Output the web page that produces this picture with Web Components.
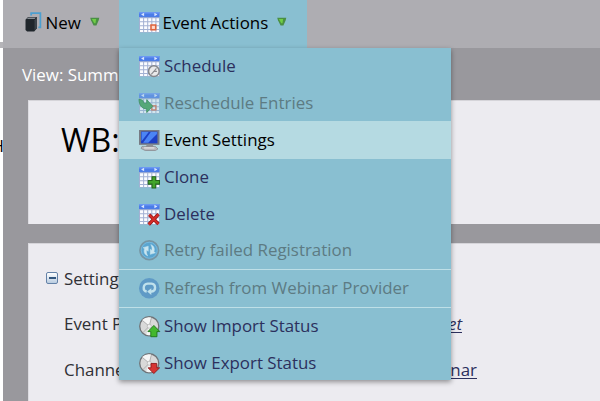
<!DOCTYPE html>
<html lang="en">
<head>
<meta charset="utf-8">
<title>Event Actions</title>
<style>
    html, body {
        margin: 0;
        height: 100%;
        overflow: hidden;
    }
    body {
        font-family: 'Open Sans', 'Noto Sans', sans-serif;
        font-size: 16.9px;
        color: #000;
    }
</style>
</head>
<body>
<event-page></event-page>

<script>
const grid = `
    <rect x="0" y="1" width="20" height="19" fill="#a3b1d3"/>
    <path d="M1 6h3v3H1zM5 6h3v3H5zM9 6h3v3H9zM13 6h3v3h-3zM17 6h2.500v3H17zM1 10h3v3H1zM5 10h3v3H5zM9 10h3v3H9zM13 10h3v3h-3zM17 10h2.500v3H17zM1 14h3v2.500H1zM5 14h3v2.500H5zM9 14h3v2.500H9zM13 14h3v2.500h-3zM17 14h2.500v2.500H17zM1 17.500h3v2H1zM5 17.500h3v2H5zM9 17.500h3v2H9zM13 17.500h3v2h-3zM17 17.500h2.500v2H17z" fill="#fbfcff"/>
    <rect width="20" height="5" fill="#4b7ce8"/>
    <path d="M0 0h20v1.500H0z" fill="#6b98f2"/>
    <path d="M2 2.500l3-1.700v3.400zM18 2.500l-3-1.700v3.400z" fill="#d9e6ff"/>`;

const disc = `
    <circle cx="10" cy="10" r="9.300" fill="#d9d9d9" stroke="#6f7377" stroke-width="1.300"/>
    <path d="M10 10L3 4A9 9 0 0 1 12 1.500zM10 10l7 6a9 9 0 0 1-10 2z" fill="#f6f6f6"/>
    <path d="M10 10L3.500 4.500M10 10l2-8M10 10l-6 6" stroke="#a4a4a4" stroke-width=".8"/>
    <circle cx="10" cy="10" r="2" fill="#eee" stroke="#aaa" stroke-width=".6"/>`;

const icons = {
    new: `
        <path d="M6 3.500V1h9v14h-2" fill="none" stroke="#4c9fd0" stroke-width="1.700"/>
        <path d="M.5 7.500L3 4.800h8.500V16L9 19H2L.5 17.500z" fill="#20262c"/>
        <path d="M1.800 6.800L3.200 5.300h7.500L9.400 6.900z" fill="#868d93"/>
        <path d="M9.300 8l2-2.500v10l-2 2.500z" fill="#3c444c"/>`,
    calendar: grid + `<rect x="11.700" y="12.700" width="4.600" height="4.600" fill="#ffd9cc" stroke="#e0633c" stroke-width="1.500"/>`,
    schedule: grid + `
        <circle cx="14.500" cy="14.800" r="5.200" fill="#e9e9ea" stroke="#85878c" stroke-width="1.500"/>
        <path d="M17 12l-2.500 3h3M14.500 15L12 18" fill="none" stroke="#8b8c90" stroke-width="1.100"/>`,
    reschedule: `<g opacity=".65">${grid}<rect x="12.500" y="12.500" width="4" height="4" fill="none" stroke="#e0633c" stroke-width="1.300"/></g>
        <path d="M0 6l3.500 1 1.500 3h2.500V6.500l6 6.500-6 6v-3.500C3 15.500 0 12 0 6z" fill="#55a878" stroke="#3f8f64" stroke-width=".8"/>`,
    settings: `
        <path d="M0 0h20v14.500H0z" fill="#777b84"/>
        <path d="M2 1.500h16v11.500H2z" fill="#1d3fc4"/>
        <path d="M2.500 2h7L2.500 11zM11.500 2h6v2L9 12.500H4z" fill="#4b84f5"/>
        <path d="M7.500 14.500h6l1 2H6.500z" fill="#8f9095"/>
        <path d="M3 16h13l2.500 2.500L16 20H6l-4-2z" fill="#b8b6ba" stroke="#85848a" stroke-width=".7"/>
        <path d="M5 17.500h10" stroke="#eee"/>`,
    clone: grid + `<path d="M12.700 9.500h3.600v3.700H20v3.500h-3.700v3.700h-3.600v-3.700H9v-3.500h3.700z" fill="#43a52c" stroke="#24641a"/>`,
    delete: grid + `<path d="M10 10.500l9 9M19 10l-9.500 10" stroke="#8c1414" stroke-width="3.200"/><path d="M10 10.500l9 9M19 10l-9.500 10" stroke="#d42c28" stroke-width="2.100"/>`,
    retry: `
        <circle cx="10" cy="10" r="9.100" fill="#5aa5d0" stroke="#7795a3" stroke-width="1.600"/>
        <circle cx="10" cy="10" r="7.800" fill="none" stroke="#7fbbdc" stroke-width=".8"/>
        <path d="M8.500 15.500C5 14 4.500 11 5.500 8.500L4 7.500l5-1.500v5L7.500 9.800c-.6 2 0 4 1 5.700zM11.500 4.500c3.500 1.500 4 4.500 3 7l1.500 1-5 1.500V9l1.500 1.200c.6-2 0-4-1-5.700z" fill="#c9e5f0" stroke="#c9e5f0" stroke-width=".5"/>`,
    refresh: `
        <circle cx="10" cy="10" r="10" fill="#5f9ac6"/>
        <path d="M7.500 13.200C3.500 12.700 3.400 6 8.500 5.500h3.700c4.600.5 4.600 7.200.3 7.700h-1" fill="none" stroke="#c0e1ec" stroke-width="2.300"/>
        <path d="M12 10v6.500l-4-3.300z" fill="#c0e1ec"/>`,
    import: disc + `<path d="M14.500 9.200l5.800 6h-2.800v5h-6v-5H8.700z" fill="#43b82e" stroke="#1f761b" stroke-width=".9"/>`,
    export: disc + `<path d="M14.500 20l5.600-5.500h-2.800v-4.300h-5.600v4.300H8.900z" fill="#d73432" stroke="#8f1c1c" stroke-width=".9"/>`,
    arrow: `
        <path d="M.5 1.500h19l-1 5-5 11.500h-6L2 7z" fill="#4a8f44"/>
        <path d="M4 4h9l-1.500 9H9z" fill="#6fce45"/>`
};

class UiIcon extends HTMLElement {
    connectedCallback() {
        this.attachShadow({ mode: 'open' }).innerHTML = `
            <style>
                :host { display: block; flex: none; width: 20.500px; height: 20.500px; }
                svg { display: block; width: 100%; height: 100%; overflow: visible; }
            </style>
            <svg viewBox="0 0 20 20">${icons[this.getAttribute('name')]}</svg>
        `;
    }
}

class ToolbarButton extends HTMLElement {
    constructor() {
        super();
        this.attachShadow({ mode: 'open' }).innerHTML = `
            <style>
                :host {
                    display: flex;
                    align-items: center;
                    box-sizing: border-box;
                    height: 48px;
                    padding-bottom: 4px;
                    white-space: nowrap;
                }
                :host([active]) { background: #89bfd1; }
                .label { margin: 0 9px 0 3.500px; }
                .arrow { width: 9.500px; height: 9.500px; }
            </style>
            <slot name="icon"></slot>
            <span class="label"><slot></slot></span>
            <ui-icon class="arrow" name="arrow"></ui-icon>
        `;
    }
}

class MenuItem extends HTMLElement {
    constructor() {
        super();
        this.attachShadow({ mode: 'open' }).innerHTML = `
            <style>
                :host {
                    display: flex;
                    align-items: center;
                    gap: 5px;
                    box-sizing: border-box;
                    height: 36.500px;
                    padding-left: 19.500px;
                    color: #2c305d;
                    white-space: nowrap;
                }
                :host([disabled]) { color: #5d7b83; }
                :host([selected]) { height: 38px; background: #b5dae2; color: #000; }
                :host([divided]) { height: 38px; border-top: 1.500px solid #bedfe7; }
                :host([selected]) span,
                :host([selected]) ~ span { margin-top: -2px; }
                span { margin-top: -1px; }
            </style>
            <slot name="icon"></slot>
            <span><slot></slot></span>
        `;
    }
}

class ActionMenu extends HTMLElement {
    constructor() {
        super();
        const items = [
            ['schedule', 'Schedule', ''],
            ['reschedule', 'Reschedule Entries', 'disabled'],
            ['settings', 'Event Settings', 'selected'],
            ['clone', 'Clone', ''],
            ['delete', 'Delete', ''],
            ['retry', 'Retry failed Registration', 'disabled'],
            ['refresh', 'Refresh from Webinar Provider', 'disabled divided'],
            ['import', 'Show Import Status', 'divided'],
            ['export', 'Show Export Status', '']
        ];
        this.attachShadow({ mode: 'open' }).innerHTML = `
            <style>
                :host {
                    display: block;
                    box-sizing: border-box;
                    width: 332px;
                    height: 332px;
                    background: #89bfd1;
                    box-shadow: 0 2px 5px rgba(0, 0, 0, .4);
                }
            </style>
            ${items.map(([icon, text, state]) => `<menu-item ${state}><ui-icon slot="icon" name="${icon}"></ui-icon>${text}</menu-item>`).join('')}
        `;
    }
}

class ContentPanel extends HTMLElement {
    constructor() {
        super();
        this.attachShadow({ mode: 'open' }).innerHTML = `
            <style>
                :host {
                    display: block;
                    box-sizing: border-box;
                    background: #ecebf0;
                    border-top: 1px solid #d5d4d9;
                    border-left: 1px solid #dddce1;
                }
            </style>
            <slot></slot>
        `;
    }
}

class SettingRow extends HTMLElement {
    constructor() {
        super();
        this.attachShadow({ mode: 'open' }).innerHTML = `
            <style>
                :host {
                    display: flex;
                    justify-content: space-between;
                    align-items: center;
                    box-sizing: border-box;
                    height: 46px;
                    padding-left: 35px;
                    color: #303035;
                    white-space: nowrap;
                }
                ::slotted(a) {
                    color: #2c305d;
                    text-decoration: underline;
                    text-underline-offset: 2px;
                }
            </style>
            <slot name="label"></slot>
            <slot></slot>
        `;
    }
}

class EventPage extends HTMLElement {
    constructor() {
        super();
        this.attachShadow({ mode: 'open' }).innerHTML = `
            <style>
                :host {
                    display: flex;
                    position: relative;
                    width: 600px;
                    height: 401px;
                    overflow: hidden;
                    background: #fff;
                }
                .edge {
                    flex: none;
                    width: 3px;
                    overflow: hidden;
                }
                .edge .line {
                    height: 6px;
                    margin-top: 42px;
                    background: #b5b4b8;
                }
                .edge .text {
                    display: flex;
                    justify-content: flex-end;
                    margin-top: 86px;
                    line-height: 23px;
                    margin-right: -1px;
                }
                main {
                    flex: 1;
                    display: flex;
                    flex-direction: column;
                    min-width: 0;
                    background: #99989d;
                }
                .toolbar {
                    display: flex;
                    height: 48px;
                    flex: none;
                    background: #aeadb2;
                }
                .new { width: 116px; padding-left: 22px; }
                .new ui-icon { margin-right: -3.500px; }
                .actions { width: 188px; padding-left: 19.500px; }
                .view {
                    flex: none;
                    height: 52px;
                    line-height: 53px;
                    padding-left: 19px;
                    color: #fff;
                }
                content-panel { margin-left: 25px; flex: none; }
                .title { height: 124px; padding: 15px 0 0 32px; }
                h1 { margin: 0; font-weight: 400; font-size: 32px; line-height: 48px; }
                .settings { height: 158px; margin-top: 19px; padding-top: 12px; }
                .heading {
                    display: flex;
                    align-items: center;
                    gap: 6px;
                    height: 44px;
                    padding-left: 17px;
                    color: #303035;
                }
                .toggle {
                    display: flex;
                    align-items: center;
                    justify-content: center;
                    box-sizing: border-box;
                    width: 12px;
                    height: 12px;
                    border: 1.500px solid #6482a8;
                    border-radius: 2px;
                    background: linear-gradient(#fff, #b9cce0);
                }
                .toggle::before { content: ''; width: 7px; height: 2px; background: #34577f; }
                setting-row { width: 448px; }
                .partner { width: 433px; }
                /* drop-down lies over the page content */
                action-menu { position: absolute; left: 119px; top: 48px; }
            </style>
            <div class="edge"><div class="line"></div><div class="text">H</div></div>
            <main>
                <div class="toolbar">
                    <toolbar-button class="new"><ui-icon slot="icon" name="new"></ui-icon>New</toolbar-button>
                    <toolbar-button class="actions" active><ui-icon slot="icon" name="calendar"></ui-icon>Event Actions</toolbar-button>
                </div>
                <div class="view">View: Summary</div>
                <content-panel class="title"><h1>WB:</h1></content-panel>
                <content-panel class="settings">
                    <div class="heading"><span class="toggle"></span>Settings</div>
                    <setting-row class="partner"><span slot="label">Event Partner:</span><a><i>Not Set yet</i></a></setting-row>
                    <setting-row><span slot="label">Channel:</span><a>Webinar</a></setting-row>
                </content-panel>
            </main>
            <action-menu></action-menu>
        `;
    }
}

customElements.define('ui-icon', UiIcon);
customElements.define('toolbar-button', ToolbarButton);
customElements.define('menu-item', MenuItem);
customElements.define('action-menu', ActionMenu);
customElements.define('content-panel', ContentPanel);
customElements.define('setting-row', SettingRow);
customElements.define('event-page', EventPage);
</script>
</body>
</html>
